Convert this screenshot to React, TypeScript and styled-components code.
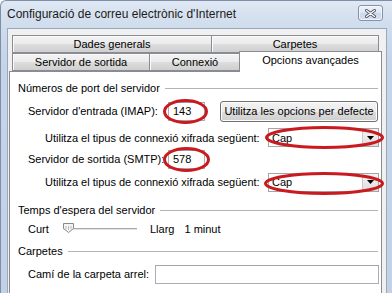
import React from "react";
import styled, { createGlobalStyle } from "styled-components";

const Global = createGlobalStyle`
  html, body { margin: 0; padding: 0; }
  body {
    background: #ffffff;
    font-family: "Liberation Sans", Arial, sans-serif;
    font-size: 11px;
    color: #000;
  }
`;

const Window = styled.div`
  width: 392px;
  height: 293px;
  overflow: hidden;
  box-sizing: border-box;
  display: flex;
  flex-direction: column;
  border-top: 1px solid #7d8fa8;
  border-left: 1px solid #7d8fa8;
  border-top-left-radius: 6px;
  background: linear-gradient(180deg, #dfe8f3 0px, #cfdcec 26px, #c5d4e7 60px, #c2d1e4 100%);
`;

const TitleBar = styled.div`
  height: 27px;
  flex: none;
  display: flex;
  align-items: center;
  padding: 0 9px 0 6px;
`;

const Title = styled.div`
  flex: 1;
  font-size: 12px;
  color: #1b1b1b;
  white-space: nowrap;
  padding-bottom: 1px;
`;

const CloseButton = styled.div`
  width: 25px;
  height: 16px;
  box-sizing: border-box;
  border: 1px solid #8393aa;
  border-radius: 3px;
  background: linear-gradient(180deg, #eef3f9 0%, #dde6f1 50%, #cdd9e8 51%, #d6e1ee 100%);
  box-shadow: inset 0 0 0 1px rgba(255, 255, 255, 0.6);
  display: flex;
  align-items: center;
  justify-content: center;
  margin-top: -3px;
`;

const Body = styled.div`
  flex: 1;
  display: flex;
  padding: 0 5px 0 6px;
  min-height: 0;
`;

const Client = styled.div`
  flex: 1;
  background: #f0f0f0;
  border-top: 1px solid #98a8bd;
  border-left: 1px solid #98a8bd;
  border-right: 1px solid #98a8bd;
  padding: 6px 0 0 1px;
  display: flex;
  flex-direction: column;
  min-height: 0;
`;

const TabStrip = styled.div`
  margin-left: 3px;
  display: flex;
  flex-direction: column;
  position: relative;
  z-index: 2;
`;

const TabRow = styled.div`
  display: flex;
  align-items: flex-end;
  height: 18px;
`;

const Tab = styled.div<{ $w: number; $active?: boolean; $first?: boolean }>`
  width: ${(p) => p.$w}px;
  flex: none;
  box-sizing: border-box;
  height: ${(p) => (p.$active ? 21 : 18)}px;
  margin-left: ${(p) => (p.$first ? 0 : p.$active ? -2 : -1)}px;
  margin-bottom: ${(p) => (p.$active ? -1 : 0)}px;
  border: 1px solid #898c95;
  border-bottom: ${(p) => (p.$active ? "none" : "1px solid #898c95")};
  background: ${(p) =>
    p.$active
      ? "#ffffff"
      : "linear-gradient(180deg, #f3f3f3 0%, #ebebeb 50%, #dddddd 51%, #cfcfcf 100%)"};
  box-shadow: ${(p) => (p.$active ? "none" : "inset 1px 1px 0 #fbfbfb")};
  display: flex;
  align-items: center;
  justify-content: center;
  padding-bottom: ${(p) => (p.$active ? 4 : 0)}px;
  font-size: 11px;
  white-space: nowrap;
  position: relative;
  z-index: ${(p) => (p.$active ? 3 : 1)};
`;

const Panel = styled.div`
  width: 373px;
  flex: 1;
  box-sizing: border-box;
  background: #ffffff;
  border: 1px solid #898c95;
  border-bottom: none;
  padding: 8px 3px 0 8px;
  display: flex;
  flex-direction: column;
  position: relative;
  z-index: 1;
`;

const GroupHeader = styled.div<{ $top: number }>`
  display: flex;
  align-items: center;
  gap: 5px;
  height: 16px;
  margin-top: ${(p) => p.$top}px;
  font-size: 11px;
  white-space: nowrap;
  &::after {
    content: "";
    flex: 1;
    height: 0;
    border-top: 1px solid #b4b4b4;
    margin-top: 1px;
  }
`;

const Row = styled.div<{ $h: number; $indent: number }>`
  display: flex;
  align-items: center;
  height: ${(p) => p.$h}px;
  padding-left: ${(p) => p.$indent}px;
  font-size: 11px;
  white-space: nowrap;
`;

const Label = styled.span<{ $w?: number }>`
  flex: none;
  width: ${(p) => (p.$w ? `${p.$w}px` : "auto")};
`;

const Field = styled.div`
  position: relative;
  flex: none;
`;

const TextBox = styled.div<{ $w?: number }>`
  width: ${(p) => (p.$w ? `${p.$w}px` : "auto")};
  height: 19px;
  box-sizing: border-box;
  border: 1px solid #abadb3;
  border-top-color: #a0a4ad;
  background: #fff;
  display: flex;
  align-items: center;
  padding-left: 4px;
  font-size: 11px;
`;

const WideBox = styled(TextBox)`
  flex: 1;
  margin-right: -1px;
`;

const PushButton = styled.div`
  margin-left: auto;
  width: 158px;
  height: 21px;
  box-sizing: border-box;
  border: 1px solid #707070;
  border-radius: 3px;
  background: linear-gradient(180deg, #f2f2f2 0%, #ebebeb 50%, #dddddd 51%, #cfcfcf 100%);
  box-shadow: inset 0 0 0 1px #fcfcfc;
  display: flex;
  align-items: center;
  justify-content: center;
  font-size: 11px;
`;

const SelectField = styled(Field)`
  margin-left: auto;
  margin-right: -1px;
`;

const Select = styled.div`
  width: 111px;
  height: 19px;
  box-sizing: border-box;
  border: 1px solid #a5a5a5;
  background: #fff;
  display: flex;
  align-items: stretch;
  font-size: 11px;
`;

const SelectValue = styled.div`
  flex: 1;
  display: flex;
  align-items: center;
  padding-left: 3px;
`;

const DropButton = styled.div`
  width: 15px;
  border-left: 1px solid #c9c9c9;
  background: linear-gradient(180deg, #f4f4f4, #dedede);
  display: flex;
  align-items: center;
  justify-content: center;
`;

const Ring = styled.svg<{ $l: number; $t: number }>`
  position: absolute;
  left: ${(p) => p.$l}px;
  top: ${(p) => p.$t}px;
  overflow: visible;
  pointer-events: none;
  z-index: 5;
`;

const Slider = styled.div`
  width: 74px;
  height: 12px;
  flex: none;
  position: relative;
  display: flex;
  align-items: center;
`;

const Track = styled.div`
  width: 100%;
  height: 1px;
  background: #a9a9a9;
  border-bottom: 1px solid #e3e3e3;
`;

const Thumb = styled.svg`
  position: absolute;
  left: 0;
  top: 0;
`;

const Gap = styled.span<{ $w: number }>`
  flex: none;
  width: ${(p) => p.$w}px;
`;

function Ellipse({ l, t, w, h }: { l: number; t: number; w: number; h: number }) {
  return (
    <Ring $l={l} $t={t} width={w} height={h} viewBox={`0 0 ${w} ${h}`}>
      <ellipse
        cx={w / 2}
        cy={h / 2}
        rx={w / 2 - 1.5}
        ry={h / 2 - 1.5}
        fill="none"
        stroke="#c81a1f"
        strokeWidth={3}
      />
    </Ring>
  );
}

function Arrow() {
  return (
    <svg width="7" height="4" viewBox="0 0 7 4">
      <path d="M0 0H7L3.5 4Z" fill="#000" />
    </svg>
  );
}

export default function App() {
  return (
    <>
      <Global />
      <Window>
        <TitleBar>
          <Title>Configuració de correu electrònic d'Internet</Title>
          <CloseButton>
            <svg width="11" height="9" viewBox="0 0 11 9">
              <path d="M1.5 1.5L9.5 7.5M9.5 1.5L1.5 7.5" stroke="#4a5568" strokeWidth="3" strokeLinecap="round" />
              <path d="M1.5 1.5L9.5 7.5M9.5 1.5L1.5 7.5" stroke="#ffffff" strokeWidth="1.3" strokeLinecap="round" />
            </svg>
          </CloseButton>
        </TitleBar>
        <Body>
          <Client>
            <TabStrip>
              <TabRow>
                <Tab $w={200} $first>Dades generals</Tab>
                <Tab $w={168}>Carpetes</Tab>
              </TabRow>
              <TabRow>
                <Tab $w={138} $first>Servidor de sortida</Tab>
                <Tab $w={92}>Connexió</Tab>
                <Tab $w={143} $active>Opcions avançades</Tab>
              </TabRow>
            </TabStrip>
            <Panel>
              <GroupHeader $top={0}>Números de port del servidor</GroupHeader>
              <Row $h={30} $indent={10}>
                <Label $w={140}>Servidor d'entrada (IMAP):</Label>
                <Field>
                  <TextBox $w={37}>143</TextBox>
                  <Ellipse l={-5} t={-3} w={45} h={25} />
                </Field>
                <PushButton>Utilitza les opcions per defecte</PushButton>
              </Row>
              <Row $h={23} $indent={27}>
                <Label>Utilitza el tipus de connexió xifrada següent:</Label>
                <SelectField>
                  <Select>
                    <SelectValue>Cap</SelectValue>
                    <DropButton>
                      <Arrow />
                    </DropButton>
                  </Select>
                  <Ellipse l={-3} t={-2} w={119} h={23} />
                </SelectField>
              </Row>
              <Row $h={20} $indent={10}>
                <Label $w={140}>Servidor de sortida (SMTP):</Label>
                <Field>
                  <TextBox $w={37}>578</TextBox>
                  <Ellipse l={-5} t={-3} w={47} h={25} />
                </Field>
              </Row>
              <Row $h={26} $indent={27}>
                <Label>Utilitza el tipus de connexió xifrada següent:</Label>
                <SelectField>
                  <Select>
                    <SelectValue>Cap</SelectValue>
                    <DropButton>
                      <Arrow />
                    </DropButton>
                  </Select>
                  <Ellipse l={-4} t={-1} w={120} h={23} />
                </SelectField>
              </Row>
              <GroupHeader $top={7}>Temps d'espera del servidor</GroupHeader>
              <Row $h={22} $indent={10}>
                <Label $w={35}>Curt</Label>
                <Slider>
                  <Track />
                  <Thumb width="11" height="10" viewBox="0 0 11 10">
                    <path d="M0.5 0.5H10.5V5.5L5.5 9.5L0.5 5.5Z" fill="#f4f4f4" stroke="#8a8a8a" />
                    <path d="M3 3V6M5.5 3V7M8 3V6" stroke="#bdbdbd" />
                  </Thumb>
                </Slider>
                <Gap $w={13} />
                <Label>Llarg</Label>
                <Gap $w={10} />
                <Label>1 minut</Label>
              </Row>
              <GroupHeader $top={3}>Carpetes</GroupHeader>
              <Row $h={30} $indent={10}>
                <Label $w={127}>Camí de la carpeta arrel:</Label>
                <WideBox />
              </Row>
            </Panel>
          </Client>
        </Body>
      </Window>
    </>
  );
}
